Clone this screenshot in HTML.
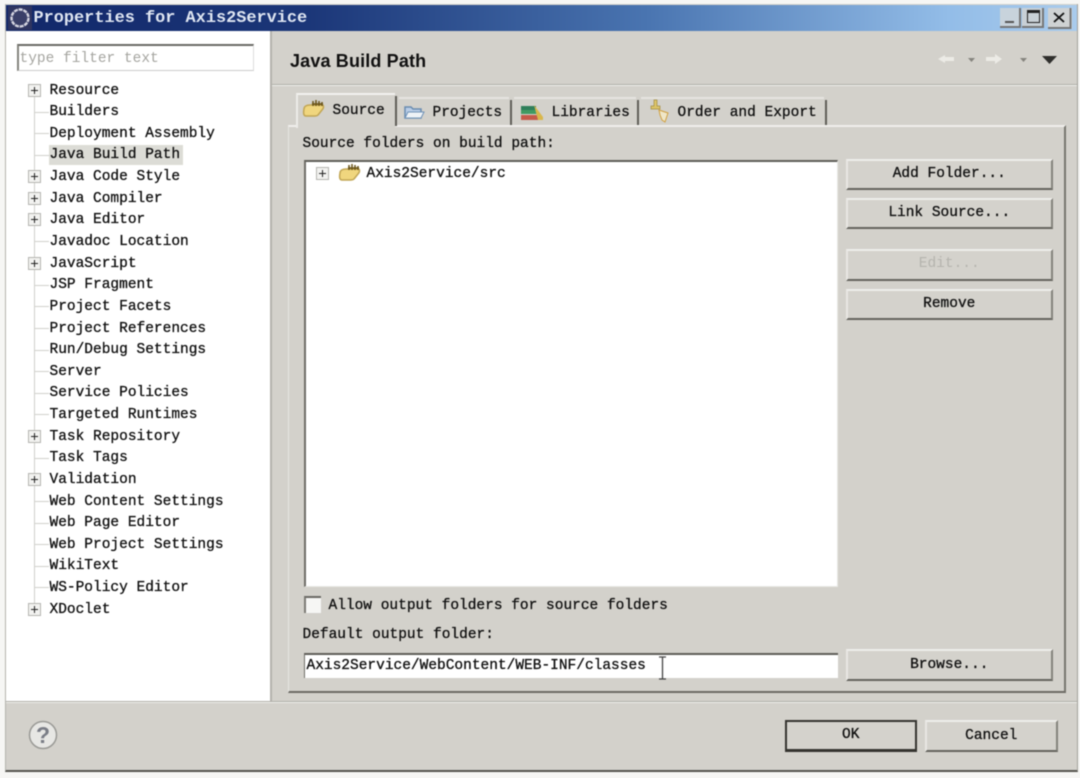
<!DOCTYPE html>
<html><head><meta charset="utf-8"><style>
html,body{margin:0;padding:0;width:1080px;height:778px;overflow:hidden;background:#f6f6f4}
#w,#w div,#w span,#w svg{position:absolute;box-sizing:border-box}
#w{left:0;top:0;width:1080px;height:778px;overflow:hidden;filter:blur(.45px)}
.t{font:14.5px/18px "Liberation Mono","Noto Sans CJK SC",monospace;color:#111;white-space:pre;-webkit-text-stroke:.3px #111;margin-top:1px;margin-left:-.5px}
.r{left:50px}
.e{left:28px;width:13px;height:13px;background:#f2f2f0;border:1px solid #b5b5b1}
.e:before{content:"";position:absolute;left:2px;top:5px;width:7px;height:1px;background:#222}
.e:after{content:"";position:absolute;left:5px;top:2px;width:1px;height:7px;background:#222}
.d{left:35px;width:14px;height:1px;background:#d0d0cc}
.b{left:846px;width:207px;background:#d4d2cc;border-top:2px solid #eeedea;border-left:2px solid #e8e7e3;border-right:2px solid #84837c;border-bottom:2px solid #65645e}
.bt{left:0;right:0;top:3px;text-align:center}
.s{width:2px;background:#5f5e58}
</style></head><body><div id="w">
<div style="left:5px;top:4px;width:1073px;height:768px;background:#d3d1cb;border-left:1px solid #b4b3ae;border-right:1px solid #a3a29c;border-bottom:2px solid #55544f"></div>
<div style="left:6px;top:5px;width:1071px;height:26px;background:linear-gradient(90deg,#12286a 0,#1b3678 28%,#4a75b1 60%,#93bde8 88%,#a9cbec 100%)"></div>
<svg style="left:8px;top:6px" width="24" height="24" viewBox="0 0 24 24"><rect width="24" height="24" fill="#2f3560"/><circle cx="12" cy="12" r="8.500" fill="#3a3f68" stroke="#d5d5e0" stroke-width="2.400" stroke-dasharray="4 .8"/></svg>
<div class="t" style="left:34px;top:8px;font:bold 16.9px/19px 'Liberation Mono',monospace;color:#dfe6f2;-webkit-text-stroke:0">Properties for Axis2Service</div>
<div style="left:1000px;top:8px;width:21px;height:20px;background:#c8d3dc;border-right:2px solid #777;border-bottom:2px solid #777"><div style="left:5px;top:13px;width:9px;height:2px;background:#555"></div></div>
<div style="left:1022px;top:8px;width:22px;height:20px;background:#c8d0d6;border-right:2px solid #777;border-bottom:2px solid #777"><div style="left:5px;top:2px;width:13px;height:13px;border:1.500px solid #222;border-top-width:3px"></div></div>
<svg style="left:1048px;top:8px" width="24" height="21" viewBox="0 0 24 21"><rect width="24" height="21" fill="#cfd2d3"/><path d="M22.500 0V20H0" fill="none" stroke="#777" stroke-width="2"/><path d="M6 5L16 14M16 5L6 14" stroke="#111" stroke-width="1.800"/></svg>

<div style="left:6px;top:31px;width:264px;height:670px;background:#fff"></div>
<div style="left:270px;top:31px;width:2px;height:670px;background:#b4b3ad"></div>
<div style="left:6px;top:701px;width:1071px;height:2px;background:#f0efec;border-top:1px solid #b0afa9"></div>
<div style="left:17px;top:44px;width:237px;height:27px;background:#fff;border-top:2px solid #6a6a65;border-left:2px solid #85857e;border-right:1px solid #ddd;border-bottom:1px solid #ccc"></div>
<div class="t" style="left:20px;top:49px;color:#a5a5a0;-webkit-text-stroke:0">type filter text</div>

<div style="left:34px;top:96px;width:1px;height:510px;background:#cfcfcb"></div>
<div class="d" style="top:112px"></div><div class="d" style="top:133px"></div><div class="d" style="top:155px"></div><div class="d" style="top:241px"></div><div class="d" style="top:285px"></div><div class="d" style="top:306px"></div><div class="d" style="top:328px"></div><div class="d" style="top:350px"></div><div class="d" style="top:371px"></div><div class="d" style="top:393px"></div><div class="d" style="top:414px"></div><div class="d" style="top:458px"></div><div class="d" style="top:501px"></div><div class="d" style="top:523px"></div><div class="d" style="top:544px"></div><div class="d" style="top:566px"></div><div class="d" style="top:587px"></div>
<div class="e" style="top:84px"></div><div class="e" style="top:170px"></div><div class="e" style="top:192px"></div><div class="e" style="top:213px"></div><div class="e" style="top:257px"></div><div class="e" style="top:430px"></div><div class="e" style="top:473px"></div><div class="e" style="top:603px"></div>
<div style="left:49px;top:145px;width:134px;height:20px;background:#dcdcd6"></div>
<div class="t r" style="top:81px">Resource</div>
<div class="t r" style="top:102px">Builders</div>
<div class="t r" style="top:124px">Deployment Assembly</div>
<div class="t r" style="top:145px">Java Build Path</div>
<div class="t r" style="top:167px">Java Code Style</div>
<div class="t r" style="top:189px">Java Compiler</div>
<div class="t r" style="top:210px">Java Editor</div>
<div class="t r" style="top:232px">Javadoc Location</div>
<div class="t r" style="top:254px">JavaScript</div>
<div class="t r" style="top:275px">JSP Fragment</div>
<div class="t r" style="top:297px">Project Facets</div>
<div class="t r" style="top:319px">Project References</div>
<div class="t r" style="top:340px">Run/Debug Settings</div>
<div class="t r" style="top:362px">Server</div>
<div class="t r" style="top:383px">Service Policies</div>
<div class="t r" style="top:405px">Targeted Runtimes</div>
<div class="t r" style="top:427px">Task Repository</div>
<div class="t r" style="top:448px">Task Tags</div>
<div class="t r" style="top:470px">Validation</div>
<div class="t r" style="top:492px">Web Content Settings</div>
<div class="t r" style="top:513px">Web Page Editor</div>
<div class="t r" style="top:535px">Web Project Settings</div>
<div class="t r" style="top:556px">WikiText</div>
<div class="t r" style="top:578px">WS-Policy Editor</div>
<div class="t r" style="top:600px">XDoclet</div>

<div style="left:290px;top:49px;font:bold 18px/24px 'Liberation Sans',sans-serif;color:#111;white-space:pre;letter-spacing:.15px">Java Build Path</div>
<div style="left:272px;top:84px;width:805px;height:2px;background:#f0efec;border-top:1px solid #b0afa9"></div>
<svg style="left:936px;top:50px" width="124" height="18" viewBox="0 0 124 18"><path d="M2 9L9 5V7H18V11H9V13Z" fill="#ecebe6"/><path d="M32 8H39L35.500 12Z" fill="#85847e"/><path d="M50 7H59V4L66 9L59 14V11H50Z" fill="#ecebe6"/><path d="M84 8H91L87.500 12Z" fill="#85847e"/><path d="M106 6H121L113.500 14Z" fill="#2f2f2c"/></svg>

<div style="left:288px;top:125px;width:778px;height:568px;border-top:2px solid #f0efec;border-left:1px solid #e6e5e1;border-right:2px solid #77766f;border-bottom:2px solid #6c6b65"></div>
<div style="left:296px;top:93px;width:99px;height:35px;background:#d3d1cb;border-top:2px solid #f3f2ef;border-left:2px solid #ecebe8"></div>
<div class="s" style="left:395px;top:96px;height:30px"></div>
<div class="s" style="left:510px;top:100px;height:25px"></div>
<div class="s" style="left:637px;top:100px;height:25px"></div>
<div class="s" style="left:825px;top:100px;height:25px"></div>
<div style="left:399px;top:97px;width:110px;height:2px;background:#e6e5e1"></div>
<div style="left:514px;top:97px;width:122px;height:2px;background:#e6e5e1"></div>
<div style="left:641px;top:97px;width:183px;height:2px;background:#e6e5e1"></div>

<svg style="left:302px;top:99px" width="23" height="20" viewBox="0 0 23 20"><path d="M2 10C2 7 5 6 8 6H20C22 6 22 9 20 11L16 16C15 17 14 17 13 17H4C2 17 1 15 2 10Z" fill="#f0d67e" stroke="#c2a654" stroke-width="1.500"/><path d="M11 7V2M14 7V1M17 7V2M20 7V3M10 5H21" stroke="#6a5418" stroke-width="1.500"/></svg>
<svg style="left:403px;top:103px" width="23" height="18" viewBox="0 0 23 18"><path d="M2 4H8L10 6H18V15H2Z" fill="#b9cde6" stroke="#6a8cb0" stroke-width="1.500"/><path d="M2 15L5 9H21L18 15Z" fill="#eef2f6" stroke="#6f93b8"/></svg>
<svg style="left:520px;top:102px" width="24" height="19" viewBox="0 0 24 19"><rect x="1" y="4" width="15" height="4" fill="#2f7f5a"/><rect x="1" y="8" width="16" height="4" fill="#3f9a62"/><rect x="1" y="13" width="18" height="5" fill="#c45a4a"/><path d="M14 3L23 15V18H18Z" fill="#d9b74c"/></svg>
<svg style="left:647px;top:98px" width="24" height="25" viewBox="0 0 24 25"><path d="M7 2H10V8H13V11H4V8H7Z" fill="#dcc468" stroke="#a38c40" stroke-width=".7"/><path d="M12 12L21 15L18 24L15 22L13 17Z" fill="#efe6c8" stroke="#d0a040"/></svg>
<div class="t" style="left:333px;top:101px">Source</div>
<div class="t" style="left:433px;top:103px">Projects</div>
<div class="t" style="left:552px;top:103px">Libraries</div>
<div class="t" style="left:678px;top:103px">Order and Export</div>
<div class="t" style="left:303px;top:134px">Source folders on build path:</div>

<div style="left:304px;top:160px;width:534px;height:427px;background:#fff;border-top:2px solid #5f5e59;border-left:2px solid #6f6e68;border-right:1px solid #e8e8e4;border-bottom:1px solid #e8e8e4"></div>
<div class="e" style="left:316px;top:167px"></div>
<svg style="left:338px;top:163px" width="23" height="19" viewBox="0 0 23 19"><path d="M2 10C2 7 5 6 8 6H20C22 6 22 9 20 11L16 16C15 17 14 17 13 17H4C2 17 1 15 2 10Z" fill="#f0d67e" stroke="#c2a654" stroke-width="1.500"/><path d="M11 7V2M14 7V1M17 7V2M20 7V3M10 5H21" stroke="#6a5418" stroke-width="1.500"/></svg>
<div class="t" style="left:367px;top:164px">Axis2Service/src</div>

<div class="b" style="top:159px;height:31px"><div class="t bt">Add Folder...</div></div>
<div class="b" style="top:198px;height:31px"><div class="t bt">Link Source...</div></div>
<div class="b" style="top:249px;height:32px"><div class="t bt" style="color:#b5b4ae;-webkit-text-stroke:0">Edit...</div></div>
<div class="b" style="top:289px;height:31px"><div class="t bt">Remove</div></div>
<div class="b" style="top:649px;height:32px"><div class="t bt" style="top:4px">Browse...</div></div>

<div style="left:304px;top:596px;width:17px;height:17px;background:#f6f6f4;border-top:2px solid #6a6964;border-left:2px solid #7c7b75"></div>
<div class="t" style="left:329px;top:596px">Allow output folders for source folders</div>
<div class="t" style="left:303px;top:625px">Default output folder:</div>
<div style="left:304px;top:653px;width:534px;height:25px;background:#fff;border-top:2px solid #5f5e59;border-left:1px solid #6f6e68"></div>
<div class="t" style="left:307px;top:656px">Axis2Service/WebContent/WEB-INF/classes</div>
<svg style="left:656px;top:656px" width="13" height="25" viewBox="0 0 13 25"><path d="M3 1H10M6.500 1V23M3 23H10" stroke="#444" stroke-width="1.300" fill="none"/></svg>

<svg style="left:28px;top:720px" width="30" height="30" viewBox="0 0 30 30"><circle cx="15" cy="15" r="13.500" fill="#e7e7e4" stroke="#9a9a96" stroke-width="1.500"/><text x="15" y="23" text-anchor="middle" font-family="Liberation Sans" font-weight="bold" font-size="23" fill="#7a7d86">?</text></svg>
<div style="left:785px;top:720px;width:132px;height:32px;background:#d4d2cc;border:2px solid #35342f;border-bottom-width:3px"><div class="t bt" style="top:3px">OK</div></div>
<div class="b" style="left:925px;top:720px;width:133px;height:32px"><div class="t bt" style="top:4px">Cancel</div></div>
</div></body></html>
